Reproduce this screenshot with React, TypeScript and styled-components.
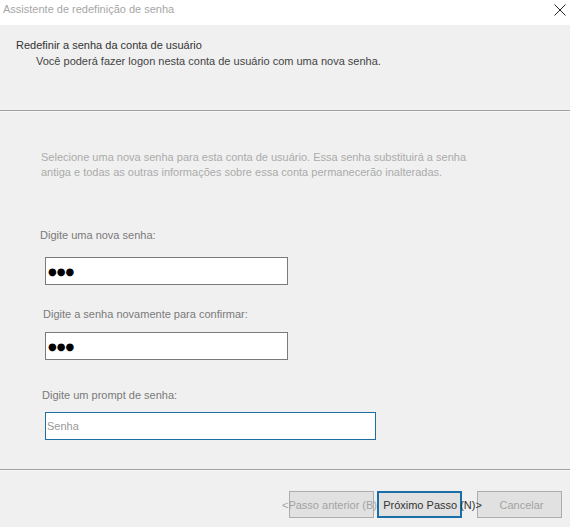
import React from "react";
import styled, { createGlobalStyle } from "styled-components";

const GlobalStyle = createGlobalStyle`
  html, body {
    margin: 0;
    padding: 0;
    background: #f0f0f0;
  }
  body {
    font-family: "Liberation Sans", Arial, sans-serif;
    font-size: 11px;
  }
`;

const Window = styled.div`
  width: 570px;
  height: 527px;
  display: flex;
  flex-direction: column;
  background: #f0f0f0;
  overflow: hidden;
`;

const TitleBar = styled.div`
  height: 25px;
  flex: none;
  background: #ffffff;
  display: flex;
  align-items: flex-start;
  justify-content: space-between;
  padding: 2px 4px 0 3px;
  box-sizing: border-box;
`;

const TitleText = styled.span`
  color: #a6a6a6;
  font-size: 11px;
  line-height: 14px;
`;

const CloseButton = styled.button`
  border: 0;
  background: transparent;
  padding: 0;
  margin-top: 2px;
  width: 12px;
  height: 12px;
  display: flex;
`;

const Header = styled.div`
  height: 86px;
  flex: none;
  box-sizing: border-box;
  padding: 13px 0 0 16px;
  border-bottom: 1px solid #a0a0a0;
  box-shadow: 0 1px 0 #f7f7f7;
`;

const HeaderTitle = styled.div`
  color: #333333;
  font-size: 11px;
  line-height: 14px;
`;

const HeaderSub = styled.div`
  color: #444444;
  font-size: 11px;
  line-height: 14px;
  margin: 2px 0 0 20px;
`;

const Body = styled.div`
  flex: 1;
  padding: 39px 0 0 0;
  display: flex;
  flex-direction: column;
  border-bottom: 1px solid #a0a0a0;
`;

const Description = styled.p`
  margin: 0 0 0 41px;
  width: 440px;
  color: #ababab;
  font-size: 11px;
  line-height: 15px;
`;

const Field = styled.div<{ $top: number }>`
  display: flex;
  flex-direction: column;
  margin-top: ${(p) => p.$top}px;
`;

const Label = styled.label<{ $indent: number }>`
  color: #7a7a7a;
  font-size: 11px;
  line-height: 14px;
  margin-left: ${(p) => p.$indent}px;
`;

const TextBox = styled.input<{ $width: number; $gap: number; $active?: boolean }>`
  box-sizing: border-box;
  margin: ${(p) => p.$gap}px 0 0 45px;
  width: ${(p) => p.$width}px;
  height: 28px;
  background: #ffffff;
  border: 1px solid ${(p) => (p.$active ? "#1b6fa3" : "#7a7a7a")};
  outline: none;
  padding: 0 0 0 1px;
  font-family: "Liberation Sans", Arial, sans-serif;
  font-size: 11px;
  color: #000;
  &::placeholder {
    color: #999999;
  }
`;

const Dots = styled(TextBox)`
  padding-left: 2px;
  font-family: "DejaVu Sans", sans-serif;
  font-size: 10px;
  letter-spacing: 0;
`;

const Footer = styled.div`
  height: 57px;
  flex: none;
  display: flex;
  justify-content: flex-end;
  align-items: flex-start;
  padding: 20px 8px 0 0;
  box-sizing: border-box;
  border-top: 1px solid #f7f7f7;
`;

const Button = styled.button<{ $primary?: boolean; $after: number; $shift: number }>`
  box-sizing: border-box;
  width: 85px;
  height: 27px;
  margin-right: ${(p) => p.$after}px;
  background: #e1e1e1;
  border: ${(p) => (p.$primary ? "2px solid #1b6fa8" : "1px solid #adadad")};
  color: ${(p) => (p.$primary ? "#333333" : "#a3a3a3")};
  font-family: "Liberation Sans", Arial, sans-serif;
  font-size: 11px;
  padding: 0;
  display: flex;
  align-items: center;
  justify-content: center;
  white-space: nowrap;
  overflow: visible;
  span {
    position: relative;
    left: ${(p) => p.$shift}px;
  }
`;

export default function App() {
  return (
    <Window>
      <GlobalStyle />
      <TitleBar>
        <TitleText>Assistente de redefinição de senha</TitleText>
        <CloseButton aria-label="Fechar">
          <svg width="12" height="12" viewBox="0 0 12 12">
            <path d="M0.5 0.5 L11.5 11.5 M11.5 0.5 L0.5 11.5" stroke="#222" strokeWidth="1" />
          </svg>
        </CloseButton>
      </TitleBar>
      <Header>
        <HeaderTitle>Redefinir a senha da conta de usuário</HeaderTitle>
        <HeaderSub>Você poderá fazer logon nesta conta de usuário com uma nova senha.</HeaderSub>
      </Header>
      <Body>
        <Description>
          Selecione uma nova senha para esta conta de usuário. Essa senha substituirá a senha
          antiga e todas as outras informações sobre essa conta permanecerão inalteradas.
        </Description>
        <Field $top={48}>
          <Label $indent={40}>Digite uma nova senha:</Label>
          <Dots $width={243} $gap={15} defaultValue="●●●" readOnly />
        </Field>
        <Field $top={22}>
          <Label $indent={43}>Digite a senha novamente para confirmar:</Label>
          <Dots $width={243} $gap={11} defaultValue="●●●" readOnly />
        </Field>
        <Field $top={28}>
          <Label $indent={42}>Digite um prompt de senha:</Label>
          <TextBox $width={331} $gap={10} $active placeholder="Senha" />
        </Field>
      </Body>
      <Footer>
        <Button disabled $after={3} $shift={-2}>
          <span>&lt;Passo anterior (B)</span>
        </Button>
        <Button $primary $after={15} $shift={13}>
          <span>Próximo Passo (N)&gt;</span>
        </Button>
        <Button disabled $after={0} $shift={2}>
          <span>Cancelar</span>
        </Button>
      </Footer>
    </Window>
  );
}
